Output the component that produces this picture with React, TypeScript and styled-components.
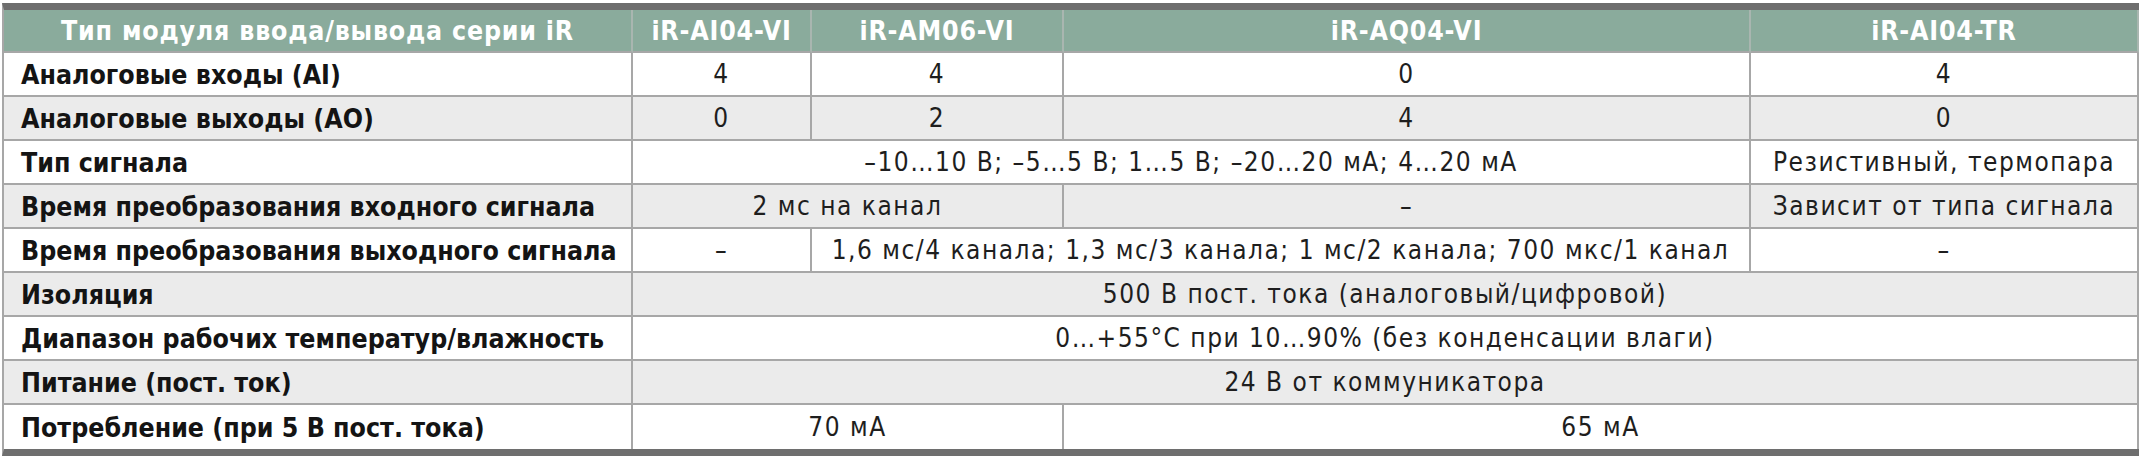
import React from "react";
import styled, { createGlobalStyle } from "styled-components";

const GlobalStyle = createGlobalStyle`
  html, body {
    margin: 0;
    padding: 0;
    background: #ffffff;
  }
  body {
    font-family: "DejaVu Sans Condensed", "DejaVu Sans", sans-serif;
  }
`;

const Page = styled.div`
  padding: 3px 2px 0 2px;
`;

const Table = styled.table`
  box-sizing: border-box;
  width: 2137px;
  table-layout: fixed;
  border-spacing: 0;
  border-collapse: separate;
  border-top: 7px solid #6e6e6e;
  border-bottom: 7px solid #6e6e6e;
  border-left: 2px solid #a7a7a7;
`;

const HeadCell = styled.th`
  box-sizing: border-box;
  height: 43px;
  padding: 0 4px;
  background: #8aab9c;
  color: #ffffff;
  font-family: "DejaVu Sans Condensed", "DejaVu Sans", sans-serif;
  font-weight: 700;
  font-size: 26.5px;
  letter-spacing: 0.8px;
  text-align: center;
  vertical-align: middle;
  white-space: nowrap;
  border-right: 2px solid #a9b6b0;
  border-bottom: 2px solid #a7a7a7;
`;

const Row = styled.tr<{ $shade: boolean }>`
  background: ${(p) => (p.$shade ? "#ebebeb" : "#ffffff")};
`;

const LabelCell = styled.td<{ $last?: boolean }>`
  box-sizing: border-box;
  height: 44px;
  padding: 0 0 0 17px;
  color: #141414;
  font-family: "DejaVu Sans Condensed", "DejaVu Sans", sans-serif;
  font-weight: 700;
  font-size: 26.5px;
  letter-spacing: 0;
  text-align: left;
  vertical-align: middle;
  white-space: nowrap;
  border-right: 2px solid #a7a7a7;
  border-bottom: ${(p) => (p.$last ? "0" : "2px solid #a7a7a7")};
`;

const ValueCell = styled.td<{ $last?: boolean }>`
  box-sizing: border-box;
  height: 44px;
  padding: 0 2px;
  color: #1e1e1e;
  font-family: "DejaVu Sans Condensed", "DejaVu Sans", sans-serif;
  font-weight: 400;
  font-size: 26px;
  letter-spacing: 1.5px;
  text-align: center;
  vertical-align: middle;
  white-space: nowrap;
  border-right: 2px solid #a7a7a7;
  border-bottom: ${(p) => (p.$last ? "0" : "2px solid #a7a7a7")};
`;

type Cell = { text: string; span?: number };
type RowData = { label: string; cells: Cell[] };

const columns = [629, 179, 252, 687, 388];

const headers = [
  "Тип модуля ввода/вывода серии iR",
  "iR-AI04-VI",
  "iR-AM06-VI",
  "iR-AQ04-VI",
  "iR-AI04-TR",
];

const rows: RowData[] = [
  {
    label: "Аналоговые входы (AI)",
    cells: [{ text: "4" }, { text: "4" }, { text: "0" }, { text: "4" }],
  },
  {
    label: "Аналоговые выходы (AO)",
    cells: [{ text: "0" }, { text: "2" }, { text: "4" }, { text: "0" }],
  },
  {
    label: "Тип сигнала",
    cells: [
      { text: "–10…10 В; –5…5 В; 1…5 В; –20…20 мА; 4…20 мА", span: 3 },
      { text: "Резистивный, термопара" },
    ],
  },
  {
    label: "Время преобразования входного сигнала",
    cells: [
      { text: "2 мс на канал", span: 2 },
      { text: "–" },
      { text: "Зависит от типа сигнала" },
    ],
  },
  {
    label: "Время преобразования выходного сигнала",
    cells: [
      { text: "–" },
      {
        text: "1,6 мс/4 канала; 1,3 мс/3 канала; 1 мс/2 канала; 700 мкс/1 канал",
        span: 2,
      },
      { text: "–" },
    ],
  },
  {
    label: "Изоляция",
    cells: [{ text: "500 В пост. тока (аналоговый/цифровой)", span: 4 }],
  },
  {
    label: "Диапазон рабочих температур/влажность",
    cells: [
      { text: "0…+55°C при 10…90% (без конденсации влаги)", span: 4 },
    ],
  },
  {
    label: "Питание (пост. ток)",
    cells: [{ text: "24 В от коммуникатора", span: 4 }],
  },
  {
    label: "Потребление (при 5 В пост. тока)",
    cells: [
      { text: "70 мА", span: 2 },
      { text: "65 мА", span: 2 },
    ],
  },
];

export default function App() {
  return (
    <>
      <GlobalStyle />
      <Page>
        <Table>
          <colgroup>
            {columns.map((w, i) => (
              <col key={i} style={{ width: w }} />
            ))}
          </colgroup>
          <thead>
            <tr>
              {headers.map((h) => (
                <HeadCell key={h}>{h}</HeadCell>
              ))}
            </tr>
          </thead>
          <tbody>
            {rows.map((r, i) => {
              const last = i === rows.length - 1;
              return (
                <Row key={r.label} $shade={i % 2 === 1}>
                  <LabelCell $last={last}>{r.label}</LabelCell>
                  {r.cells.map((c, j) => (
                    <ValueCell key={j} colSpan={c.span} $last={last}>
                      {c.text}
                    </ValueCell>
                  ))}
                </Row>
              );
            })}
          </tbody>
        </Table>
      </Page>
    </>
  );
}
